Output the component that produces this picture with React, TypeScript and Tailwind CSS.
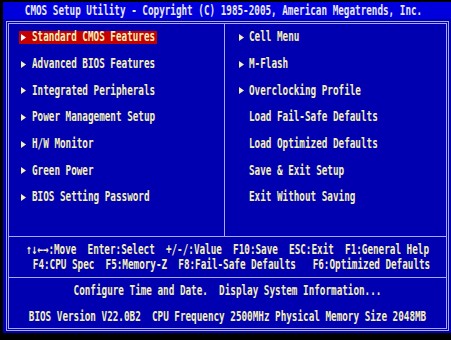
import React from "react";

const Tri = ({ fill = "#f4f0b8" }: { fill?: string }) => (
  <svg width="5" height="7" viewBox="0 0 5 7" className="shrink-0">
    <polygon points="0,0 5,3.5 0,7" fill={fill} />
  </svg>
);

const T = ({ children, className = "" }: { children: React.ReactNode; className?: string }) => (
  <span className={"inline-block whitespace-pre scale-y-[1.45] font-bold text-[9.3px] leading-[10px] font-['DejaVu_Sans_Mono',monospace] " + className}>
    {children}
  </span>
);

const left = [
  "Standard CMOS Features",
  "Advanced BIOS Features",
  "Integrated Peripherals",
  "Power Management Setup",
  "H/W Monitor",
  "Green Power",
  "BIOS Setting Password",
];

const right: [string, boolean][] = [
  ["Cell Menu", true],
  ["M-Flash", true],
  ["Overclocking Profile", true],
  ["Load Fail-Safe Defaults", false],
  ["Load Optimized Defaults", false],
  ["Save & Exit Setup", false],
  ["Exit Without Saving", false],
];

export default function App() {
  return (
    <div className="w-[451px] h-[340px] bg-black flex flex-col pl-[3px] pt-[2px] pb-[7px] text-[#f4f0b8]">
      <div className="h-[17px] bg-[#0000dc] flex items-center justify-center pr-[7px] text-[#e8e8f0]">
        <T>CMOS Setup Utility - Copyright (C) 1985-2005, American Megatrends, Inc.</T>
      </div>
      <div className="flex-1 bg-[#0000b0] pl-[3px] pr-[2px] pt-[2px] pb-[2px] flex">
        <div className="flex-1 border-[3px] border-double border-[#a8a8f8] flex flex-col">
          <div className="h-[212px] flex">
            <div className="w-[216px] flex flex-col border-r border-[#a8a8f8]">
              {left.map((s, i) => (
                <div key={s} className="h-[26.7px] flex items-center">
                  <div
                    className={
                      "ml-[10px] pl-[2px] pr-[2px] h-[13px] flex items-center gap-[6px] " +
                      (i === 0 ? "bg-[#c40000]" : "")
                    }
                  >
                    <Tri fill={i === 0 ? "#ffffff" : "#f4f0b8"} />
                    <T>{s}</T>
                  </div>
                </div>
              ))}
            </div>
            <div className="flex-1 flex flex-col">
              {right.map(([s, arrow]) => (
                <div key={s} className="h-[26.7px] flex items-center pl-[14px] gap-[5px]">
                  {arrow ? <Tri /> : <span className="w-[5px] shrink-0" />}
                  <T>{s}</T>
                </div>
              ))}
            </div>
          </div>
          <div className="h-[41px] border-t border-[#a8a8f8] flex flex-col items-center justify-center gap-[5px]">
            <T className="scale-y-[1.4]">{"↑↓←→:Move  Enter:Select  +/-/:Value  F10:Save  ESC:Exit  F1:General Help"}</T>
            <T className="pl-[8px] scale-y-[1.4]">{"F4:CPU Spec  F5:Memory-Z  F8:Fail-Safe Defaults   F6:Optimized Defaults"}</T>
          </div>
          <div className="flex-1 border-t border-[#a8a8f8] flex flex-col items-center pt-[8px] gap-[16px]">
            <T>{"Configure Time and Date.  Display System Information..."}</T>
            <T>{"BIOS Version V22.0B2  CPU Frequency 2500MHz Physical Memory Size 2048MB"}</T>
          </div>
        </div>
      </div>
    </div>
  );
}
